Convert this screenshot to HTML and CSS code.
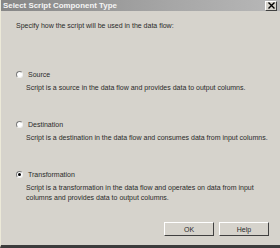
FILE: index.html
```html
<!DOCTYPE html>
<html lang="en">
<head>
    <meta charset="UTF-8">
    <title>Select Script Component Type</title>
    <link rel="stylesheet" href="styles.css">
</head>
<body>
    <div class="window">
        <div class="titlebar">
            <span class="title">Select Script Component Type</span>
            <span class="close">
                <svg width="7" height="7" viewBox="0 0 7 7"><path d="M0.5 0.5 L6.5 6.5 M6.5 0.5 L0.5 6.5" stroke="#000" stroke-width="1.4"/></svg>
            </span>
        </div>
        <div class="content">
            <p class="intro">Specify how the script will be used in the data flow:</p>

            <div class="option">
                <label class="choice"><span class="radio"></span>Source</label>
                <p class="desc">Script is a source in the data flow and provides data to output columns.</p>
            </div>

            <div class="option">
                <label class="choice"><span class="radio"></span>Destination</label>
                <p class="desc">Script is a destination in the data flow and consumes data from input columns.</p>
            </div>

            <div class="option">
                <label class="choice"><span class="radio checked"></span>Transformation</label>
                <p class="desc">Script is a transformation in the data flow and operates on data from input<br>columns and provides data to output columns.</p>
            </div>
        </div>
        <div class="buttons">
            <button class="button">OK</button>
            <button class="button">Help</button>
        </div>
    </div>
</body>
</html>
```
FILE: styles.css
```css
*{
    margin: 0;
    padding: 0;
    box-sizing: border-box;
}

body{
    background: #d4d0c8;
    font-family: "Liberation Sans", Arial, sans-serif;
    font-size: 7px;
    color: #2a2a2a;
}

.window{
    width: 280px;
    height: 248px;
    display: flex;
    flex-direction: column;
    background: #d6d3cc;
    border-left: 1px solid #ece9d8;
    border-bottom: 3px solid #3c3c3c;
}

.titlebar{
    height: 11px;
    display: flex;
    align-items: center;
    justify-content: space-between;
    padding: 0 3px 0 2px;
    background: linear-gradient(90deg, #868686, #a6a6a6 60%, #b8b8b8);
}

.title{
    color: #f4f4f4;
    font-weight: bold;
    font-size: 7.9px;
}

.close{
    width: 12px;
    height: 10px;
    display: flex;
    align-items: center;
    justify-content: center;
    background: #d6d3cc;
    border: 1px solid;
    border-color: #fff #404040 #404040 #fff;
}

.content{
    flex: 1;
    padding: 10px 0 0 15px;
}

.intro{
    line-height: 9px;
    margin-bottom: 40px;
}

.option{
    margin-bottom: 27px;
}

.option:last-child{
    margin-bottom: 0;
}

.choice{
    display: flex;
    align-items: center;
    height: 9px;
    gap: 5px;
}

.radio{
    width: 7px;
    height: 7px;
    border-radius: 50%;
    background: #fff;
    border: 1px solid;
    border-color: #7a7a7a #f0f0f0 #f0f0f0 #7a7a7a;
    display: flex;
    align-items: center;
    justify-content: center;
}

.radio.checked::after{
    content: "";
    width: 3px;
    height: 3px;
    border-radius: 50%;
    background: #000;
}

.desc{
    margin: 4px 0 0 10px;
    line-height: 10px;
}

.buttons{
    display: flex;
    justify-content: flex-end;
    gap: 5px;
    padding: 0 11px 9px 0;
}

.button{
    width: 50px;
    height: 14px;
    font-family: inherit;
    font-size: 7px;
    color: #2a2a2a;
    background: #d6d3cc;
    border: 1px solid;
    border-color: #fff #404040 #404040 #fff;
}
```
